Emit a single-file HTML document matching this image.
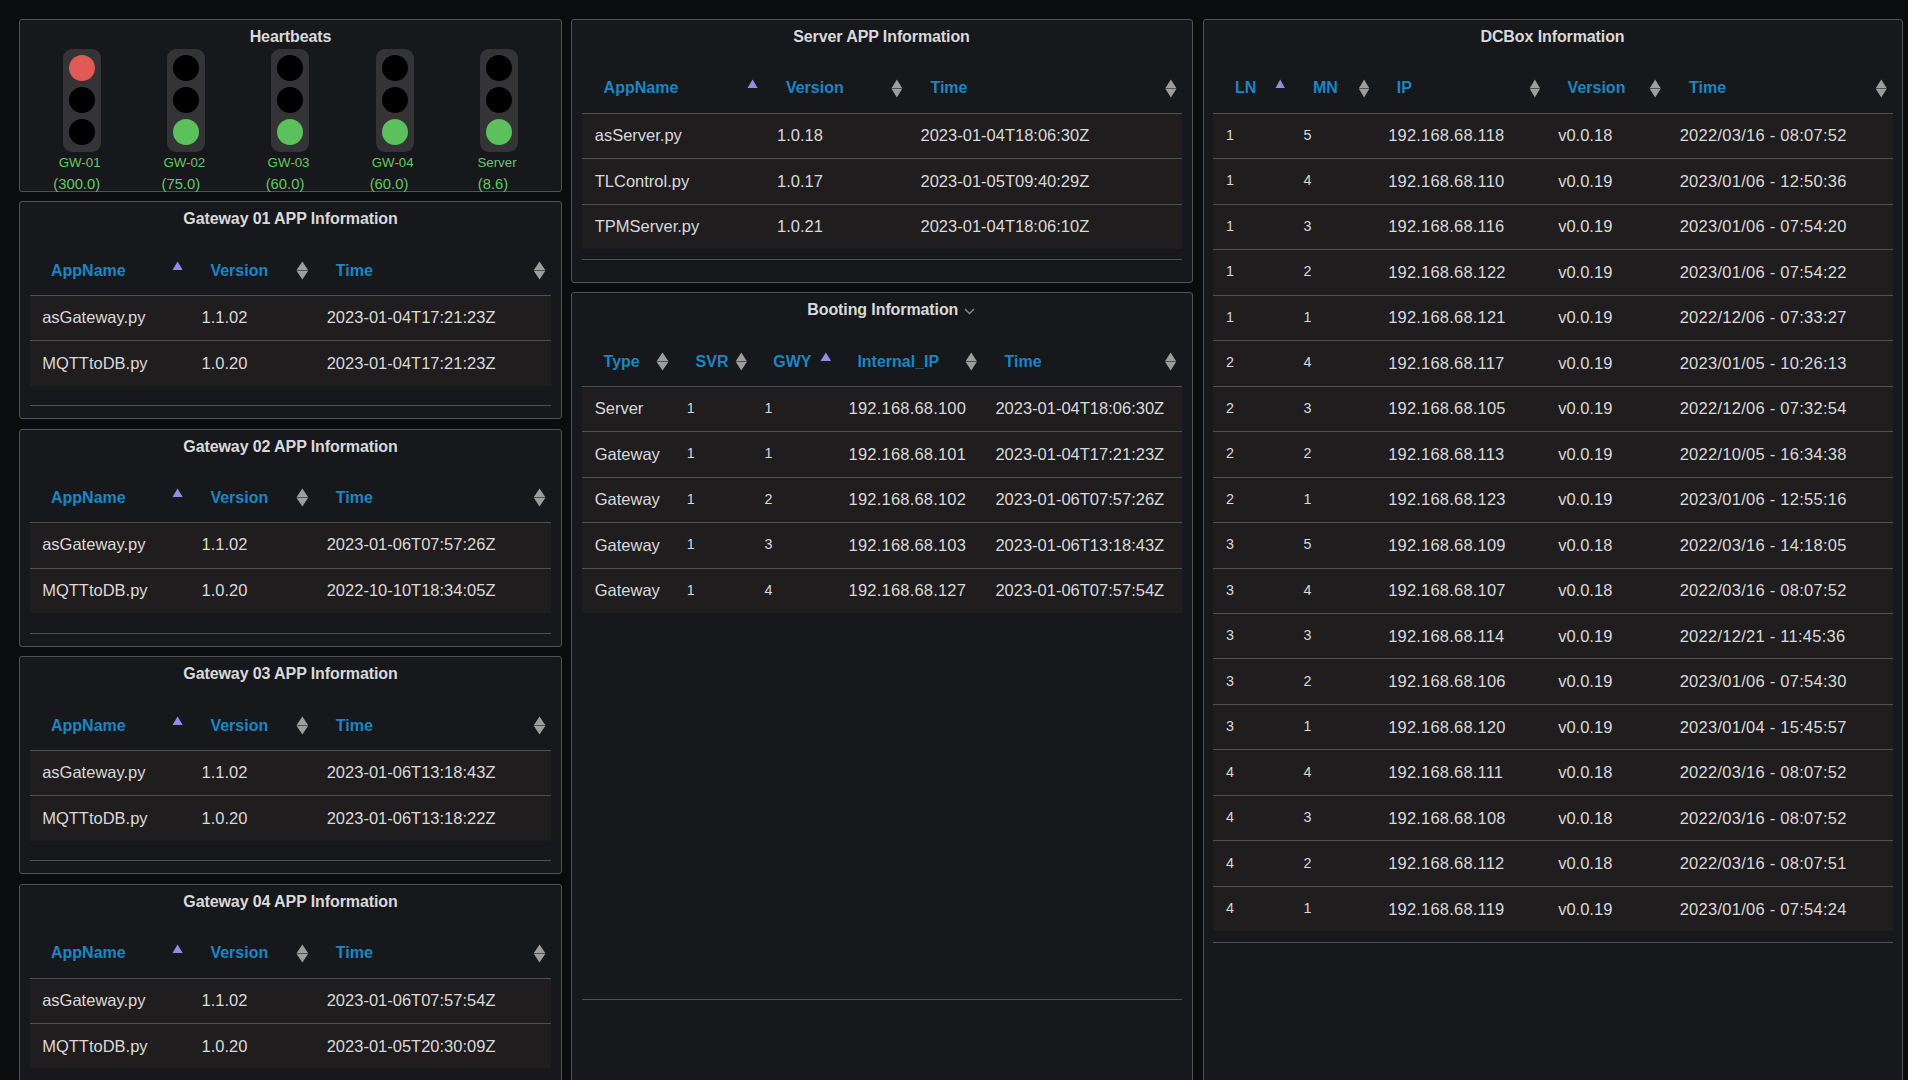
<!DOCTYPE html><html><head><meta charset="utf-8"><title>Dashboard</title><style>
html,body{margin:0;padding:0;background:#0b0c0e;width:1908px;height:1080px;overflow:hidden;font-family:"Liberation Sans",sans-serif;}
.t{position:absolute;white-space:nowrap;line-height:1;}
.r{position:absolute;}
.p{position:absolute;box-sizing:border-box;border:1px solid #505155;border-radius:3px;background:#17181b;}
</style></head><body>
<div class="p" style="left:19px;top:19px;width:543px;height:173px"></div>
<div class="p" style="left:19px;top:201px;width:543px;height:218px"></div>
<div class="p" style="left:19px;top:429px;width:543px;height:218px"></div>
<div class="p" style="left:19px;top:656px;width:543px;height:218px"></div>
<div class="p" style="left:19px;top:884px;width:543px;height:218px"></div>
<div class="p" style="left:571px;top:19px;width:622px;height:264px"></div>
<div class="p" style="left:571px;top:292px;width:622px;height:809px"></div>
<div class="p" style="left:1203px;top:19px;width:700px;height:1082px"></div>
<div class="t" style="left:-9.50px;width:600px;text-align:center;top:28.76px;font-size:16px;font-weight:700;color:#d8d9da;letter-spacing:-0.1px">Heartbeats</div>
<div class="r" style="left:63px;top:49px;width:38px;height:103px;background:#343436;border-radius:9px"></div>
<div class="r" style="left:69px;top:55px;width:26px;height:26px;border-radius:50%;background:#e05a55"></div>
<div class="r" style="left:69px;top:87px;width:26px;height:26px;border-radius:50%;background:#000"></div>
<div class="r" style="left:69px;top:119px;width:26px;height:26px;border-radius:50%;background:#000"></div>
<div class="t" style="left:-220.40px;width:600px;text-align:center;top:155.94px;font-size:13.3px;font-weight:400;color:#64c864;">GW-01</div>
<div class="t" style="left:-223.30px;width:600px;text-align:center;top:176.77px;font-size:14.8px;font-weight:400;color:#64c864;">(300.0)</div>
<div class="r" style="left:167px;top:49px;width:38px;height:103px;background:#343436;border-radius:9px"></div>
<div class="r" style="left:173px;top:55px;width:26px;height:26px;border-radius:50%;background:#000"></div>
<div class="r" style="left:173px;top:87px;width:26px;height:26px;border-radius:50%;background:#000"></div>
<div class="r" style="left:173px;top:119px;width:26px;height:26px;border-radius:50%;background:#5cc05c"></div>
<div class="t" style="left:-115.70px;width:600px;text-align:center;top:155.94px;font-size:13.3px;font-weight:400;color:#64c864;">GW-02</div>
<div class="t" style="left:-119.20px;width:600px;text-align:center;top:176.77px;font-size:14.8px;font-weight:400;color:#64c864;">(75.0)</div>
<div class="r" style="left:271px;top:49px;width:38px;height:103px;background:#343436;border-radius:9px"></div>
<div class="r" style="left:277px;top:55px;width:26px;height:26px;border-radius:50%;background:#000"></div>
<div class="r" style="left:277px;top:87px;width:26px;height:26px;border-radius:50%;background:#000"></div>
<div class="r" style="left:277px;top:119px;width:26px;height:26px;border-radius:50%;background:#5cc05c"></div>
<div class="t" style="left:-11.50px;width:600px;text-align:center;top:155.94px;font-size:13.3px;font-weight:400;color:#64c864;">GW-03</div>
<div class="t" style="left:-15.00px;width:600px;text-align:center;top:176.77px;font-size:14.8px;font-weight:400;color:#64c864;">(60.0)</div>
<div class="r" style="left:376px;top:49px;width:38px;height:103px;background:#343436;border-radius:9px"></div>
<div class="r" style="left:382px;top:55px;width:26px;height:26px;border-radius:50%;background:#000"></div>
<div class="r" style="left:382px;top:87px;width:26px;height:26px;border-radius:50%;background:#000"></div>
<div class="r" style="left:382px;top:119px;width:26px;height:26px;border-radius:50%;background:#5cc05c"></div>
<div class="t" style="left:92.70px;width:600px;text-align:center;top:155.94px;font-size:13.3px;font-weight:400;color:#64c864;">GW-04</div>
<div class="t" style="left:89.00px;width:600px;text-align:center;top:176.77px;font-size:14.8px;font-weight:400;color:#64c864;">(60.0)</div>
<div class="r" style="left:480px;top:49px;width:38px;height:103px;background:#343436;border-radius:9px"></div>
<div class="r" style="left:486px;top:55px;width:26px;height:26px;border-radius:50%;background:#000"></div>
<div class="r" style="left:486px;top:87px;width:26px;height:26px;border-radius:50%;background:#000"></div>
<div class="r" style="left:486px;top:119px;width:26px;height:26px;border-radius:50%;background:#5cc05c"></div>
<div class="t" style="left:197.00px;width:600px;text-align:center;top:155.94px;font-size:13.3px;font-weight:400;color:#64c864;">Server</div>
<div class="t" style="left:193.00px;width:600px;text-align:center;top:176.77px;font-size:14.8px;font-weight:400;color:#64c864;">(8.6)</div>
<div class="t" style="left:-9.50px;width:600px;text-align:center;top:210.76px;font-size:16px;font-weight:700;color:#d8d9da;letter-spacing:-0.1px">Gateway 01 APP Information</div>
<div class="t" style="left:51.00px;top:263.46px;font-size:16px;font-weight:700;color:#1b86c3;">AppName</div>
<div class="t" style="left:210.40px;top:263.46px;font-size:16px;font-weight:700;color:#1b86c3;">Version</div>
<div class="t" style="left:335.80px;top:263.46px;font-size:16px;font-weight:700;color:#1b86c3;">Time</div>
<svg class="r" style="left:172.3px;top:260.5px" width="11.2" height="10" viewBox="0 0 11.2 10"><polygon points="0.5,9 5.60,0.5 10.70,9" fill="#8e8ee2"/></svg>
<svg class="r" style="left:296px;top:261px" width="14" height="19" viewBox="0 0 14 19"><polygon points="0.50,9.2 6.35,0.6 12.20,9.2" fill="#9d9d9d"/><polygon points="0.50,9.85 6.35,18.4 12.20,9.85" fill="#9d9d9d"/></svg>
<svg class="r" style="left:533px;top:261px" width="14" height="19" viewBox="0 0 14 19"><polygon points="0.70,9.2 6.55,0.6 12.40,9.2" fill="#9d9d9d"/><polygon points="0.70,9.85 6.55,18.4 12.40,9.85" fill="#9d9d9d"/></svg>
<div class="r" style="left:30px;top:295px;width:521px;height:1px;background:#505052;"></div>
<div class="r" style="left:30px;top:296px;width:521px;height:90px;background:#201d1e;"></div>
<div class="r" style="left:30px;top:340px;width:521px;height:1px;background:#505052;"></div>
<div class="r" style="left:30px;top:405px;width:521px;height:1px;background:#505052;"></div>
<div class="t" style="left:42.20px;top:309.23px;font-size:16.5px;font-weight:400;color:#d8d9da;">asGateway.py</div>
<div class="t" style="left:201.60px;top:309.23px;font-size:16.5px;font-weight:400;color:#d8d9da;">1.1.02</div>
<div class="t" style="left:326.70px;top:309.23px;font-size:16.5px;font-weight:400;color:#d8d9da;">2023-01-04T17:21:23Z</div>
<div class="t" style="left:42.20px;top:354.73px;font-size:16.5px;font-weight:400;color:#d8d9da;">MQTTtoDB.py</div>
<div class="t" style="left:201.60px;top:354.73px;font-size:16.5px;font-weight:400;color:#d8d9da;">1.0.20</div>
<div class="t" style="left:326.70px;top:354.73px;font-size:16.5px;font-weight:400;color:#d8d9da;">2023-01-04T17:21:23Z</div>
<div class="t" style="left:-9.50px;width:600px;text-align:center;top:438.76px;font-size:16px;font-weight:700;color:#d8d9da;letter-spacing:-0.1px">Gateway 02 APP Information</div>
<div class="t" style="left:51.00px;top:490.46px;font-size:16px;font-weight:700;color:#1b86c3;">AppName</div>
<div class="t" style="left:210.40px;top:490.46px;font-size:16px;font-weight:700;color:#1b86c3;">Version</div>
<div class="t" style="left:335.80px;top:490.46px;font-size:16px;font-weight:700;color:#1b86c3;">Time</div>
<svg class="r" style="left:172.3px;top:487.5px" width="11.2" height="10" viewBox="0 0 11.2 10"><polygon points="0.5,9 5.60,0.5 10.70,9" fill="#8e8ee2"/></svg>
<svg class="r" style="left:296px;top:488px" width="14" height="19" viewBox="0 0 14 19"><polygon points="0.50,9.2 6.35,0.6 12.20,9.2" fill="#9d9d9d"/><polygon points="0.50,9.85 6.35,18.4 12.20,9.85" fill="#9d9d9d"/></svg>
<svg class="r" style="left:533px;top:488px" width="14" height="19" viewBox="0 0 14 19"><polygon points="0.70,9.2 6.55,0.6 12.40,9.2" fill="#9d9d9d"/><polygon points="0.70,9.85 6.55,18.4 12.40,9.85" fill="#9d9d9d"/></svg>
<div class="r" style="left:30px;top:522px;width:521px;height:1px;background:#505052;"></div>
<div class="r" style="left:30px;top:523px;width:521px;height:90px;background:#201d1e;"></div>
<div class="r" style="left:30px;top:568px;width:521px;height:1px;background:#505052;"></div>
<div class="r" style="left:30px;top:633px;width:521px;height:1px;background:#505052;"></div>
<div class="t" style="left:42.20px;top:536.23px;font-size:16.5px;font-weight:400;color:#d8d9da;">asGateway.py</div>
<div class="t" style="left:201.60px;top:536.23px;font-size:16.5px;font-weight:400;color:#d8d9da;">1.1.02</div>
<div class="t" style="left:326.70px;top:536.23px;font-size:16.5px;font-weight:400;color:#d8d9da;">2023-01-06T07:57:26Z</div>
<div class="t" style="left:42.20px;top:581.73px;font-size:16.5px;font-weight:400;color:#d8d9da;">MQTTtoDB.py</div>
<div class="t" style="left:201.60px;top:581.73px;font-size:16.5px;font-weight:400;color:#d8d9da;">1.0.20</div>
<div class="t" style="left:326.70px;top:581.73px;font-size:16.5px;font-weight:400;color:#d8d9da;">2022-10-10T18:34:05Z</div>
<div class="t" style="left:-9.50px;width:600px;text-align:center;top:665.76px;font-size:16px;font-weight:700;color:#d8d9da;letter-spacing:-0.1px">Gateway 03 APP Information</div>
<div class="t" style="left:51.00px;top:718.46px;font-size:16px;font-weight:700;color:#1b86c3;">AppName</div>
<div class="t" style="left:210.40px;top:718.46px;font-size:16px;font-weight:700;color:#1b86c3;">Version</div>
<div class="t" style="left:335.80px;top:718.46px;font-size:16px;font-weight:700;color:#1b86c3;">Time</div>
<svg class="r" style="left:172.3px;top:715.5px" width="11.2" height="10" viewBox="0 0 11.2 10"><polygon points="0.5,9 5.60,0.5 10.70,9" fill="#8e8ee2"/></svg>
<svg class="r" style="left:296px;top:716px" width="14" height="19" viewBox="0 0 14 19"><polygon points="0.50,9.2 6.35,0.6 12.20,9.2" fill="#9d9d9d"/><polygon points="0.50,9.85 6.35,18.4 12.20,9.85" fill="#9d9d9d"/></svg>
<svg class="r" style="left:533px;top:716px" width="14" height="19" viewBox="0 0 14 19"><polygon points="0.70,9.2 6.55,0.6 12.40,9.2" fill="#9d9d9d"/><polygon points="0.70,9.85 6.55,18.4 12.40,9.85" fill="#9d9d9d"/></svg>
<div class="r" style="left:30px;top:750px;width:521px;height:1px;background:#505052;"></div>
<div class="r" style="left:30px;top:751px;width:521px;height:90px;background:#201d1e;"></div>
<div class="r" style="left:30px;top:795px;width:521px;height:1px;background:#505052;"></div>
<div class="r" style="left:30px;top:860px;width:521px;height:1px;background:#505052;"></div>
<div class="t" style="left:42.20px;top:764.23px;font-size:16.5px;font-weight:400;color:#d8d9da;">asGateway.py</div>
<div class="t" style="left:201.60px;top:764.23px;font-size:16.5px;font-weight:400;color:#d8d9da;">1.1.02</div>
<div class="t" style="left:326.70px;top:764.23px;font-size:16.5px;font-weight:400;color:#d8d9da;">2023-01-06T13:18:43Z</div>
<div class="t" style="left:42.20px;top:809.73px;font-size:16.5px;font-weight:400;color:#d8d9da;">MQTTtoDB.py</div>
<div class="t" style="left:201.60px;top:809.73px;font-size:16.5px;font-weight:400;color:#d8d9da;">1.0.20</div>
<div class="t" style="left:326.70px;top:809.73px;font-size:16.5px;font-weight:400;color:#d8d9da;">2023-01-06T13:18:22Z</div>
<div class="t" style="left:-9.50px;width:600px;text-align:center;top:893.76px;font-size:16px;font-weight:700;color:#d8d9da;letter-spacing:-0.1px">Gateway 04 APP Information</div>
<div class="t" style="left:51.00px;top:945.46px;font-size:16px;font-weight:700;color:#1b86c3;">AppName</div>
<div class="t" style="left:210.40px;top:945.46px;font-size:16px;font-weight:700;color:#1b86c3;">Version</div>
<div class="t" style="left:335.80px;top:945.46px;font-size:16px;font-weight:700;color:#1b86c3;">Time</div>
<svg class="r" style="left:172.3px;top:943.5px" width="11.2" height="10" viewBox="0 0 11.2 10"><polygon points="0.5,9 5.60,0.5 10.70,9" fill="#8e8ee2"/></svg>
<svg class="r" style="left:296px;top:944px" width="14" height="19" viewBox="0 0 14 19"><polygon points="0.50,9.2 6.35,0.6 12.20,9.2" fill="#9d9d9d"/><polygon points="0.50,9.85 6.35,18.4 12.20,9.85" fill="#9d9d9d"/></svg>
<svg class="r" style="left:533px;top:944px" width="14" height="19" viewBox="0 0 14 19"><polygon points="0.70,9.2 6.55,0.6 12.40,9.2" fill="#9d9d9d"/><polygon points="0.70,9.85 6.55,18.4 12.40,9.85" fill="#9d9d9d"/></svg>
<div class="r" style="left:30px;top:978px;width:521px;height:1px;background:#505052;"></div>
<div class="r" style="left:30px;top:979px;width:521px;height:89px;background:#201d1e;"></div>
<div class="r" style="left:30px;top:1023px;width:521px;height:1px;background:#505052;"></div>
<div class="r" style="left:30px;top:1088px;width:521px;height:1px;background:#505052;"></div>
<div class="t" style="left:42.20px;top:992.23px;font-size:16.5px;font-weight:400;color:#d8d9da;">asGateway.py</div>
<div class="t" style="left:201.60px;top:992.23px;font-size:16.5px;font-weight:400;color:#d8d9da;">1.1.02</div>
<div class="t" style="left:326.70px;top:992.23px;font-size:16.5px;font-weight:400;color:#d8d9da;">2023-01-06T07:57:54Z</div>
<div class="t" style="left:42.20px;top:1037.73px;font-size:16.5px;font-weight:400;color:#d8d9da;">MQTTtoDB.py</div>
<div class="t" style="left:201.60px;top:1037.73px;font-size:16.5px;font-weight:400;color:#d8d9da;">1.0.20</div>
<div class="t" style="left:326.70px;top:1037.73px;font-size:16.5px;font-weight:400;color:#d8d9da;">2023-01-05T20:30:09Z</div>
<div class="t" style="left:581.50px;width:600px;text-align:center;top:28.76px;font-size:16px;font-weight:700;color:#d8d9da;letter-spacing:-0.1px">Server APP Information</div>
<div class="t" style="left:603.60px;top:80.46px;font-size:16px;font-weight:700;color:#1b86c3;">AppName</div>
<div class="t" style="left:785.90px;top:80.46px;font-size:16px;font-weight:700;color:#1b86c3;">Version</div>
<div class="t" style="left:930.40px;top:80.46px;font-size:16px;font-weight:700;color:#1b86c3;">Time</div>
<svg class="r" style="left:747.4px;top:78.5px" width="11.2" height="10" viewBox="0 0 11.2 10"><polygon points="0.5,9 5.60,0.5 10.70,9" fill="#8e8ee2"/></svg>
<svg class="r" style="left:891px;top:79px" width="13" height="19" viewBox="0 0 13 19"><polygon points="0.50,9.2 5.85,0.6 11.20,9.2" fill="#9d9d9d"/><polygon points="0.50,9.85 5.85,18.4 11.20,9.85" fill="#9d9d9d"/></svg>
<svg class="r" style="left:1165px;top:79px" width="13" height="19" viewBox="0 0 13 19"><polygon points="0.30,9.2 5.90,0.6 11.50,9.2" fill="#9d9d9d"/><polygon points="0.30,9.85 5.90,18.4 11.50,9.85" fill="#9d9d9d"/></svg>
<div class="r" style="left:582px;top:113px;width:600px;height:1px;background:#505052;"></div>
<div class="r" style="left:582px;top:114px;width:600px;height:135px;background:#201d1e;"></div>
<div class="r" style="left:582px;top:158px;width:600px;height:1px;background:#505052;"></div>
<div class="r" style="left:582px;top:204px;width:600px;height:1px;background:#505052;"></div>
<div class="r" style="left:582px;top:259px;width:600px;height:1px;background:#505052;"></div>
<div class="t" style="left:594.75px;top:127.23px;font-size:16.5px;font-weight:400;color:#d8d9da;">asServer.py</div>
<div class="t" style="left:777.00px;top:127.23px;font-size:16.5px;font-weight:400;color:#d8d9da;">1.0.18</div>
<div class="t" style="left:920.50px;top:127.23px;font-size:16.5px;font-weight:400;color:#d8d9da;">2023-01-04T18:06:30Z</div>
<div class="t" style="left:594.75px;top:172.73px;font-size:16.5px;font-weight:400;color:#d8d9da;">TLControl.py</div>
<div class="t" style="left:777.00px;top:172.73px;font-size:16.5px;font-weight:400;color:#d8d9da;">1.0.17</div>
<div class="t" style="left:920.50px;top:172.73px;font-size:16.5px;font-weight:400;color:#d8d9da;">2023-01-05T09:40:29Z</div>
<div class="t" style="left:594.75px;top:218.23px;font-size:16.5px;font-weight:400;color:#d8d9da;">TPMServer.py</div>
<div class="t" style="left:777.00px;top:218.23px;font-size:16.5px;font-weight:400;color:#d8d9da;">1.0.21</div>
<div class="t" style="left:920.50px;top:218.23px;font-size:16.5px;font-weight:400;color:#d8d9da;">2023-01-04T18:06:10Z</div>
<div class="t" style="left:807.30px;top:302.26px;font-size:16px;font-weight:700;color:#d8d9da;letter-spacing:-0.1px">Booting Information</div>
<svg class="r" style="left:964px;top:308px" width="11" height="7" viewBox="0 0 11 7"><polyline points="1,1 5.5,5.5 10,1" fill="none" stroke="#8e8e90" stroke-width="1.3"/></svg>
<div class="t" style="left:603.60px;top:354.46px;font-size:16px;font-weight:700;color:#1b86c3;">Type</div>
<div class="t" style="left:695.60px;top:354.46px;font-size:16px;font-weight:700;color:#1b86c3;">SVR</div>
<div class="t" style="left:773.30px;top:354.46px;font-size:16px;font-weight:700;color:#1b86c3;">GWY</div>
<div class="t" style="left:857.40px;top:354.46px;font-size:16px;font-weight:700;color:#1b86c3;">Internal_IP</div>
<div class="t" style="left:1004.60px;top:354.46px;font-size:16px;font-weight:700;color:#1b86c3;">Time</div>
<svg class="r" style="left:656px;top:352px" width="14" height="19" viewBox="0 0 14 19"><polygon points="0.60,9.2 6.55,0.6 12.50,9.2" fill="#9d9d9d"/><polygon points="0.60,9.85 6.55,18.4 12.50,9.85" fill="#9d9d9d"/></svg>
<svg class="r" style="left:735px;top:352px" width="13" height="19" viewBox="0 0 13 19"><polygon points="0.70,9.2 6.30,0.6 11.90,9.2" fill="#9d9d9d"/><polygon points="0.70,9.85 6.30,18.4 11.90,9.85" fill="#9d9d9d"/></svg>
<svg class="r" style="left:819.6px;top:351.5px" width="11.6" height="10" viewBox="0 0 11.6 10"><polygon points="0.5,9 5.80,0.5 11.10,9" fill="#8e8ee2"/></svg>
<svg class="r" style="left:965px;top:352px" width="13" height="19" viewBox="0 0 13 19"><polygon points="0.60,9.2 6.25,0.6 11.90,9.2" fill="#9d9d9d"/><polygon points="0.60,9.85 6.25,18.4 11.90,9.85" fill="#9d9d9d"/></svg>
<svg class="r" style="left:1165px;top:352px" width="13" height="19" viewBox="0 0 13 19"><polygon points="0.00,9.2 5.60,0.6 11.20,9.2" fill="#9d9d9d"/><polygon points="0.00,9.85 5.60,18.4 11.20,9.85" fill="#9d9d9d"/></svg>
<div class="r" style="left:582px;top:386px;width:600px;height:1px;background:#505052;"></div>
<div class="r" style="left:582px;top:387px;width:600px;height:226px;background:#201d1e;"></div>
<div class="r" style="left:582px;top:431px;width:600px;height:1px;background:#505052;"></div>
<div class="r" style="left:582px;top:477px;width:600px;height:1px;background:#505052;"></div>
<div class="r" style="left:582px;top:522px;width:600px;height:1px;background:#505052;"></div>
<div class="r" style="left:582px;top:568px;width:600px;height:1px;background:#505052;"></div>
<div class="r" style="left:582px;top:999px;width:600px;height:1px;background:#505052;"></div>
<div class="t" style="left:594.75px;top:400.23px;font-size:16.5px;font-weight:400;color:#d8d9da;">Server</div>
<div class="t" style="left:686.70px;top:400.80px;font-size:14.3px;font-weight:400;color:#d8d9da;">1</div>
<div class="t" style="left:764.40px;top:400.80px;font-size:14.3px;font-weight:400;color:#d8d9da;">1</div>
<div class="t" style="left:848.60px;top:400.23px;font-size:16.5px;font-weight:400;color:#d8d9da;letter-spacing:0.2px">192.168.68.100</div>
<div class="t" style="left:995.40px;top:400.23px;font-size:16.5px;font-weight:400;color:#d8d9da;">2023-01-04T18:06:30Z</div>
<div class="t" style="left:594.75px;top:445.73px;font-size:16.5px;font-weight:400;color:#d8d9da;">Gateway</div>
<div class="t" style="left:686.70px;top:446.30px;font-size:14.3px;font-weight:400;color:#d8d9da;">1</div>
<div class="t" style="left:764.40px;top:446.30px;font-size:14.3px;font-weight:400;color:#d8d9da;">1</div>
<div class="t" style="left:848.60px;top:445.73px;font-size:16.5px;font-weight:400;color:#d8d9da;letter-spacing:0.2px">192.168.68.101</div>
<div class="t" style="left:995.40px;top:445.73px;font-size:16.5px;font-weight:400;color:#d8d9da;">2023-01-04T17:21:23Z</div>
<div class="t" style="left:594.75px;top:491.23px;font-size:16.5px;font-weight:400;color:#d8d9da;">Gateway</div>
<div class="t" style="left:686.70px;top:491.80px;font-size:14.3px;font-weight:400;color:#d8d9da;">1</div>
<div class="t" style="left:764.40px;top:491.80px;font-size:14.3px;font-weight:400;color:#d8d9da;">2</div>
<div class="t" style="left:848.60px;top:491.23px;font-size:16.5px;font-weight:400;color:#d8d9da;letter-spacing:0.2px">192.168.68.102</div>
<div class="t" style="left:995.40px;top:491.23px;font-size:16.5px;font-weight:400;color:#d8d9da;">2023-01-06T07:57:26Z</div>
<div class="t" style="left:594.75px;top:536.73px;font-size:16.5px;font-weight:400;color:#d8d9da;">Gateway</div>
<div class="t" style="left:686.70px;top:537.30px;font-size:14.3px;font-weight:400;color:#d8d9da;">1</div>
<div class="t" style="left:764.40px;top:537.30px;font-size:14.3px;font-weight:400;color:#d8d9da;">3</div>
<div class="t" style="left:848.60px;top:536.73px;font-size:16.5px;font-weight:400;color:#d8d9da;letter-spacing:0.2px">192.168.68.103</div>
<div class="t" style="left:995.40px;top:536.73px;font-size:16.5px;font-weight:400;color:#d8d9da;">2023-01-06T13:18:43Z</div>
<div class="t" style="left:594.75px;top:582.23px;font-size:16.5px;font-weight:400;color:#d8d9da;">Gateway</div>
<div class="t" style="left:686.70px;top:582.80px;font-size:14.3px;font-weight:400;color:#d8d9da;">1</div>
<div class="t" style="left:764.40px;top:582.80px;font-size:14.3px;font-weight:400;color:#d8d9da;">4</div>
<div class="t" style="left:848.60px;top:582.23px;font-size:16.5px;font-weight:400;color:#d8d9da;letter-spacing:0.2px">192.168.68.127</div>
<div class="t" style="left:995.40px;top:582.23px;font-size:16.5px;font-weight:400;color:#d8d9da;">2023-01-06T07:57:54Z</div>
<div class="t" style="left:1252.50px;width:600px;text-align:center;top:28.76px;font-size:16px;font-weight:700;color:#d8d9da;letter-spacing:-0.1px">DCBox Information</div>
<div class="t" style="left:1235.00px;top:80.46px;font-size:16px;font-weight:700;color:#1b86c3;">LN</div>
<div class="t" style="left:1313.00px;top:80.46px;font-size:16px;font-weight:700;color:#1b86c3;">MN</div>
<div class="t" style="left:1396.80px;top:80.46px;font-size:16px;font-weight:700;color:#1b86c3;">IP</div>
<div class="t" style="left:1567.60px;top:80.46px;font-size:16px;font-weight:700;color:#1b86c3;">Version</div>
<div class="t" style="left:1689.00px;top:80.46px;font-size:16px;font-weight:700;color:#1b86c3;">Time</div>
<svg class="r" style="left:1275.3px;top:78.5px" width="10.4" height="10" viewBox="0 0 10.4 10"><polygon points="0.5,9 5.20,0.5 9.90,9" fill="#8e8ee2"/></svg>
<svg class="r" style="left:1358px;top:79px" width="13" height="19" viewBox="0 0 13 19"><polygon points="0.90,9.2 6.10,0.6 11.30,9.2" fill="#9d9d9d"/><polygon points="0.90,9.85 6.10,18.4 11.30,9.85" fill="#9d9d9d"/></svg>
<svg class="r" style="left:1529px;top:79px" width="12" height="19" viewBox="0 0 12 19"><polygon points="0.70,9.2 5.85,0.6 11.00,9.2" fill="#9d9d9d"/><polygon points="0.70,9.85 5.85,18.4 11.00,9.85" fill="#9d9d9d"/></svg>
<svg class="r" style="left:1649px;top:79px" width="13" height="19" viewBox="0 0 13 19"><polygon points="0.70,9.2 6.20,0.6 11.70,9.2" fill="#9d9d9d"/><polygon points="0.70,9.85 6.20,18.4 11.70,9.85" fill="#9d9d9d"/></svg>
<svg class="r" style="left:1875px;top:79px" width="13" height="19" viewBox="0 0 13 19"><polygon points="0.70,9.2 6.25,0.6 11.80,9.2" fill="#9d9d9d"/><polygon points="0.70,9.85 6.25,18.4 11.80,9.85" fill="#9d9d9d"/></svg>
<div class="r" style="left:1213px;top:113px;width:680px;height:1px;background:#505052;"></div>
<div class="r" style="left:1213px;top:114px;width:680px;height:817px;background:#201d1e;"></div>
<div class="r" style="left:1213px;top:158px;width:680px;height:1px;background:#505052;"></div>
<div class="r" style="left:1213px;top:204px;width:680px;height:1px;background:#505052;"></div>
<div class="r" style="left:1213px;top:249px;width:680px;height:1px;background:#505052;"></div>
<div class="r" style="left:1213px;top:295px;width:680px;height:1px;background:#505052;"></div>
<div class="r" style="left:1213px;top:340px;width:680px;height:1px;background:#505052;"></div>
<div class="r" style="left:1213px;top:386px;width:680px;height:1px;background:#505052;"></div>
<div class="r" style="left:1213px;top:431px;width:680px;height:1px;background:#505052;"></div>
<div class="r" style="left:1213px;top:477px;width:680px;height:1px;background:#505052;"></div>
<div class="r" style="left:1213px;top:522px;width:680px;height:1px;background:#505052;"></div>
<div class="r" style="left:1213px;top:568px;width:680px;height:1px;background:#505052;"></div>
<div class="r" style="left:1213px;top:613px;width:680px;height:1px;background:#505052;"></div>
<div class="r" style="left:1213px;top:658px;width:680px;height:1px;background:#505052;"></div>
<div class="r" style="left:1213px;top:704px;width:680px;height:1px;background:#505052;"></div>
<div class="r" style="left:1213px;top:749px;width:680px;height:1px;background:#505052;"></div>
<div class="r" style="left:1213px;top:795px;width:680px;height:1px;background:#505052;"></div>
<div class="r" style="left:1213px;top:840px;width:680px;height:1px;background:#505052;"></div>
<div class="r" style="left:1213px;top:886px;width:680px;height:1px;background:#505052;"></div>
<div class="r" style="left:1213px;top:942px;width:680px;height:1px;background:#505052;"></div>
<div class="t" style="left:1226.00px;top:127.80px;font-size:14.3px;font-weight:400;color:#d8d9da;">1</div>
<div class="t" style="left:1303.40px;top:127.80px;font-size:14.3px;font-weight:400;color:#d8d9da;">5</div>
<div class="t" style="left:1388.20px;top:127.23px;font-size:16.5px;font-weight:400;color:#d8d9da;letter-spacing:0.2px">192.168.68.118</div>
<div class="t" style="left:1558.20px;top:127.23px;font-size:16.5px;font-weight:400;color:#d8d9da;">v0.0.18</div>
<div class="t" style="left:1679.70px;top:127.23px;font-size:16.5px;font-weight:400;color:#d8d9da;letter-spacing:0.26px">2022/03/16 - 08:07:52</div>
<div class="t" style="left:1226.00px;top:173.30px;font-size:14.3px;font-weight:400;color:#d8d9da;">1</div>
<div class="t" style="left:1303.40px;top:173.30px;font-size:14.3px;font-weight:400;color:#d8d9da;">4</div>
<div class="t" style="left:1388.20px;top:172.73px;font-size:16.5px;font-weight:400;color:#d8d9da;letter-spacing:0.2px">192.168.68.110</div>
<div class="t" style="left:1558.20px;top:172.73px;font-size:16.5px;font-weight:400;color:#d8d9da;">v0.0.19</div>
<div class="t" style="left:1679.70px;top:172.73px;font-size:16.5px;font-weight:400;color:#d8d9da;letter-spacing:0.26px">2023/01/06 - 12:50:36</div>
<div class="t" style="left:1226.00px;top:218.80px;font-size:14.3px;font-weight:400;color:#d8d9da;">1</div>
<div class="t" style="left:1303.40px;top:218.80px;font-size:14.3px;font-weight:400;color:#d8d9da;">3</div>
<div class="t" style="left:1388.20px;top:218.23px;font-size:16.5px;font-weight:400;color:#d8d9da;letter-spacing:0.2px">192.168.68.116</div>
<div class="t" style="left:1558.20px;top:218.23px;font-size:16.5px;font-weight:400;color:#d8d9da;">v0.0.19</div>
<div class="t" style="left:1679.70px;top:218.23px;font-size:16.5px;font-weight:400;color:#d8d9da;letter-spacing:0.26px">2023/01/06 - 07:54:20</div>
<div class="t" style="left:1226.00px;top:264.30px;font-size:14.3px;font-weight:400;color:#d8d9da;">1</div>
<div class="t" style="left:1303.40px;top:264.30px;font-size:14.3px;font-weight:400;color:#d8d9da;">2</div>
<div class="t" style="left:1388.20px;top:263.73px;font-size:16.5px;font-weight:400;color:#d8d9da;letter-spacing:0.2px">192.168.68.122</div>
<div class="t" style="left:1558.20px;top:263.73px;font-size:16.5px;font-weight:400;color:#d8d9da;">v0.0.19</div>
<div class="t" style="left:1679.70px;top:263.73px;font-size:16.5px;font-weight:400;color:#d8d9da;letter-spacing:0.26px">2023/01/06 - 07:54:22</div>
<div class="t" style="left:1226.00px;top:309.80px;font-size:14.3px;font-weight:400;color:#d8d9da;">1</div>
<div class="t" style="left:1303.40px;top:309.80px;font-size:14.3px;font-weight:400;color:#d8d9da;">1</div>
<div class="t" style="left:1388.20px;top:309.23px;font-size:16.5px;font-weight:400;color:#d8d9da;letter-spacing:0.2px">192.168.68.121</div>
<div class="t" style="left:1558.20px;top:309.23px;font-size:16.5px;font-weight:400;color:#d8d9da;">v0.0.19</div>
<div class="t" style="left:1679.70px;top:309.23px;font-size:16.5px;font-weight:400;color:#d8d9da;letter-spacing:0.26px">2022/12/06 - 07:33:27</div>
<div class="t" style="left:1226.00px;top:355.30px;font-size:14.3px;font-weight:400;color:#d8d9da;">2</div>
<div class="t" style="left:1303.40px;top:355.30px;font-size:14.3px;font-weight:400;color:#d8d9da;">4</div>
<div class="t" style="left:1388.20px;top:354.73px;font-size:16.5px;font-weight:400;color:#d8d9da;letter-spacing:0.2px">192.168.68.117</div>
<div class="t" style="left:1558.20px;top:354.73px;font-size:16.5px;font-weight:400;color:#d8d9da;">v0.0.19</div>
<div class="t" style="left:1679.70px;top:354.73px;font-size:16.5px;font-weight:400;color:#d8d9da;letter-spacing:0.26px">2023/01/05 - 10:26:13</div>
<div class="t" style="left:1226.00px;top:400.80px;font-size:14.3px;font-weight:400;color:#d8d9da;">2</div>
<div class="t" style="left:1303.40px;top:400.80px;font-size:14.3px;font-weight:400;color:#d8d9da;">3</div>
<div class="t" style="left:1388.20px;top:400.23px;font-size:16.5px;font-weight:400;color:#d8d9da;letter-spacing:0.2px">192.168.68.105</div>
<div class="t" style="left:1558.20px;top:400.23px;font-size:16.5px;font-weight:400;color:#d8d9da;">v0.0.19</div>
<div class="t" style="left:1679.70px;top:400.23px;font-size:16.5px;font-weight:400;color:#d8d9da;letter-spacing:0.26px">2022/12/06 - 07:32:54</div>
<div class="t" style="left:1226.00px;top:446.30px;font-size:14.3px;font-weight:400;color:#d8d9da;">2</div>
<div class="t" style="left:1303.40px;top:446.30px;font-size:14.3px;font-weight:400;color:#d8d9da;">2</div>
<div class="t" style="left:1388.20px;top:445.73px;font-size:16.5px;font-weight:400;color:#d8d9da;letter-spacing:0.2px">192.168.68.113</div>
<div class="t" style="left:1558.20px;top:445.73px;font-size:16.5px;font-weight:400;color:#d8d9da;">v0.0.19</div>
<div class="t" style="left:1679.70px;top:445.73px;font-size:16.5px;font-weight:400;color:#d8d9da;letter-spacing:0.26px">2022/10/05 - 16:34:38</div>
<div class="t" style="left:1226.00px;top:491.80px;font-size:14.3px;font-weight:400;color:#d8d9da;">2</div>
<div class="t" style="left:1303.40px;top:491.80px;font-size:14.3px;font-weight:400;color:#d8d9da;">1</div>
<div class="t" style="left:1388.20px;top:491.23px;font-size:16.5px;font-weight:400;color:#d8d9da;letter-spacing:0.2px">192.168.68.123</div>
<div class="t" style="left:1558.20px;top:491.23px;font-size:16.5px;font-weight:400;color:#d8d9da;">v0.0.19</div>
<div class="t" style="left:1679.70px;top:491.23px;font-size:16.5px;font-weight:400;color:#d8d9da;letter-spacing:0.26px">2023/01/06 - 12:55:16</div>
<div class="t" style="left:1226.00px;top:537.30px;font-size:14.3px;font-weight:400;color:#d8d9da;">3</div>
<div class="t" style="left:1303.40px;top:537.30px;font-size:14.3px;font-weight:400;color:#d8d9da;">5</div>
<div class="t" style="left:1388.20px;top:536.73px;font-size:16.5px;font-weight:400;color:#d8d9da;letter-spacing:0.2px">192.168.68.109</div>
<div class="t" style="left:1558.20px;top:536.73px;font-size:16.5px;font-weight:400;color:#d8d9da;">v0.0.18</div>
<div class="t" style="left:1679.70px;top:536.73px;font-size:16.5px;font-weight:400;color:#d8d9da;letter-spacing:0.26px">2022/03/16 - 14:18:05</div>
<div class="t" style="left:1226.00px;top:582.80px;font-size:14.3px;font-weight:400;color:#d8d9da;">3</div>
<div class="t" style="left:1303.40px;top:582.80px;font-size:14.3px;font-weight:400;color:#d8d9da;">4</div>
<div class="t" style="left:1388.20px;top:582.23px;font-size:16.5px;font-weight:400;color:#d8d9da;letter-spacing:0.2px">192.168.68.107</div>
<div class="t" style="left:1558.20px;top:582.23px;font-size:16.5px;font-weight:400;color:#d8d9da;">v0.0.18</div>
<div class="t" style="left:1679.70px;top:582.23px;font-size:16.5px;font-weight:400;color:#d8d9da;letter-spacing:0.26px">2022/03/16 - 08:07:52</div>
<div class="t" style="left:1226.00px;top:628.30px;font-size:14.3px;font-weight:400;color:#d8d9da;">3</div>
<div class="t" style="left:1303.40px;top:628.30px;font-size:14.3px;font-weight:400;color:#d8d9da;">3</div>
<div class="t" style="left:1388.20px;top:627.73px;font-size:16.5px;font-weight:400;color:#d8d9da;letter-spacing:0.2px">192.168.68.114</div>
<div class="t" style="left:1558.20px;top:627.73px;font-size:16.5px;font-weight:400;color:#d8d9da;">v0.0.19</div>
<div class="t" style="left:1679.70px;top:627.73px;font-size:16.5px;font-weight:400;color:#d8d9da;letter-spacing:0.26px">2022/12/21 - 11:45:36</div>
<div class="t" style="left:1226.00px;top:673.80px;font-size:14.3px;font-weight:400;color:#d8d9da;">3</div>
<div class="t" style="left:1303.40px;top:673.80px;font-size:14.3px;font-weight:400;color:#d8d9da;">2</div>
<div class="t" style="left:1388.20px;top:673.23px;font-size:16.5px;font-weight:400;color:#d8d9da;letter-spacing:0.2px">192.168.68.106</div>
<div class="t" style="left:1558.20px;top:673.23px;font-size:16.5px;font-weight:400;color:#d8d9da;">v0.0.19</div>
<div class="t" style="left:1679.70px;top:673.23px;font-size:16.5px;font-weight:400;color:#d8d9da;letter-spacing:0.26px">2023/01/06 - 07:54:30</div>
<div class="t" style="left:1226.00px;top:719.30px;font-size:14.3px;font-weight:400;color:#d8d9da;">3</div>
<div class="t" style="left:1303.40px;top:719.30px;font-size:14.3px;font-weight:400;color:#d8d9da;">1</div>
<div class="t" style="left:1388.20px;top:718.73px;font-size:16.5px;font-weight:400;color:#d8d9da;letter-spacing:0.2px">192.168.68.120</div>
<div class="t" style="left:1558.20px;top:718.73px;font-size:16.5px;font-weight:400;color:#d8d9da;">v0.0.19</div>
<div class="t" style="left:1679.70px;top:718.73px;font-size:16.5px;font-weight:400;color:#d8d9da;letter-spacing:0.26px">2023/01/04 - 15:45:57</div>
<div class="t" style="left:1226.00px;top:764.80px;font-size:14.3px;font-weight:400;color:#d8d9da;">4</div>
<div class="t" style="left:1303.40px;top:764.80px;font-size:14.3px;font-weight:400;color:#d8d9da;">4</div>
<div class="t" style="left:1388.20px;top:764.23px;font-size:16.5px;font-weight:400;color:#d8d9da;letter-spacing:0.2px">192.168.68.111</div>
<div class="t" style="left:1558.20px;top:764.23px;font-size:16.5px;font-weight:400;color:#d8d9da;">v0.0.18</div>
<div class="t" style="left:1679.70px;top:764.23px;font-size:16.5px;font-weight:400;color:#d8d9da;letter-spacing:0.26px">2022/03/16 - 08:07:52</div>
<div class="t" style="left:1226.00px;top:810.30px;font-size:14.3px;font-weight:400;color:#d8d9da;">4</div>
<div class="t" style="left:1303.40px;top:810.30px;font-size:14.3px;font-weight:400;color:#d8d9da;">3</div>
<div class="t" style="left:1388.20px;top:809.73px;font-size:16.5px;font-weight:400;color:#d8d9da;letter-spacing:0.2px">192.168.68.108</div>
<div class="t" style="left:1558.20px;top:809.73px;font-size:16.5px;font-weight:400;color:#d8d9da;">v0.0.18</div>
<div class="t" style="left:1679.70px;top:809.73px;font-size:16.5px;font-weight:400;color:#d8d9da;letter-spacing:0.26px">2022/03/16 - 08:07:52</div>
<div class="t" style="left:1226.00px;top:855.80px;font-size:14.3px;font-weight:400;color:#d8d9da;">4</div>
<div class="t" style="left:1303.40px;top:855.80px;font-size:14.3px;font-weight:400;color:#d8d9da;">2</div>
<div class="t" style="left:1388.20px;top:855.23px;font-size:16.5px;font-weight:400;color:#d8d9da;letter-spacing:0.2px">192.168.68.112</div>
<div class="t" style="left:1558.20px;top:855.23px;font-size:16.5px;font-weight:400;color:#d8d9da;">v0.0.18</div>
<div class="t" style="left:1679.70px;top:855.23px;font-size:16.5px;font-weight:400;color:#d8d9da;letter-spacing:0.26px">2022/03/16 - 08:07:51</div>
<div class="t" style="left:1226.00px;top:901.30px;font-size:14.3px;font-weight:400;color:#d8d9da;">4</div>
<div class="t" style="left:1303.40px;top:901.30px;font-size:14.3px;font-weight:400;color:#d8d9da;">1</div>
<div class="t" style="left:1388.20px;top:900.73px;font-size:16.5px;font-weight:400;color:#d8d9da;letter-spacing:0.2px">192.168.68.119</div>
<div class="t" style="left:1558.20px;top:900.73px;font-size:16.5px;font-weight:400;color:#d8d9da;">v0.0.19</div>
<div class="t" style="left:1679.70px;top:900.73px;font-size:16.5px;font-weight:400;color:#d8d9da;letter-spacing:0.26px">2023/01/06 - 07:54:24</div>
</body></html>
